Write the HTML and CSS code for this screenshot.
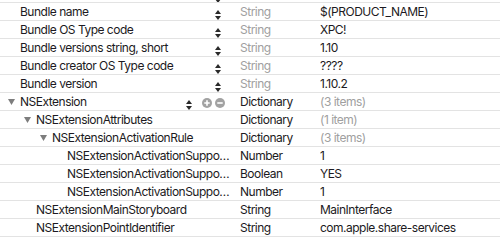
FILE: index.html
```html
<!DOCTYPE html>
<html lang="en">
<head>
  <meta charset="UTF-8">
  <title>Info.plist</title>
  <link rel="stylesheet" href="styles.css">
</head>
<body>
  <div class="plist">
    <!-- row above the visible area, only its bottom edge shows -->
    <div class="row cut">
      <div class="key">
        <span class="name"></span>
        <svg class="stepper" viewBox="0 0 6 10"><path d="M3 0L6 4H0z M0 6h6L3 10z"/></svg>
      </div>
    </div>

    <div class="row">
      <div class="key lvl0"><span class="slot"></span><span class="name">Bundle name</span>
        <svg class="stepper" viewBox="0 0 6 10"><path d="M3 0L6 4H0z M0 6h6L3 10z"/></svg></div>
      <div class="type dim">String</div>
      <div class="value">$(PRODUCT_NAME)</div>
    </div>
    <div class="row">
      <div class="key lvl0"><span class="slot"></span><span class="name">Bundle OS Type code</span>
        <svg class="stepper" viewBox="0 0 6 10"><path d="M3 0L6 4H0z M0 6h6L3 10z"/></svg></div>
      <div class="type dim">String</div>
      <div class="value">XPC!</div>
    </div>
    <div class="row">
      <div class="key lvl0"><span class="slot"></span><span class="name">Bundle versions string, short</span>
        <svg class="stepper" viewBox="0 0 6 10"><path d="M3 0L6 4H0z M0 6h6L3 10z"/></svg></div>
      <div class="type dim">String</div>
      <div class="value">1.10</div>
    </div>
    <div class="row">
      <div class="key lvl0"><span class="slot"></span><span class="name">Bundle creator OS Type code</span>
        <svg class="stepper" viewBox="0 0 6 10"><path d="M3 0L6 4H0z M0 6h6L3 10z"/></svg></div>
      <div class="type dim">String</div>
      <div class="value">????</div>
    </div>
    <div class="row">
      <div class="key lvl0"><span class="slot"></span><span class="name">Bundle version</span>
        <svg class="stepper" viewBox="0 0 6 10"><path d="M3 0L6 4H0z M0 6h6L3 10z"/></svg></div>
      <div class="type dim">String</div>
      <div class="value">1.10.2</div>
    </div>

    <div class="row hover">
      <div class="key lvl0">
        <span class="slot"><svg class="disclosure" viewBox="0 0 7 6"><path d="M0 0h7L3.5 6z"/></svg></span>
        <span class="name">NSExtension</span>
        <svg class="stepper" viewBox="0 0 6 10"><path d="M3 0L6 4H0z M0 6h6L3 10z"/></svg>
        <svg class="circle-btn" viewBox="0 0 10 10"><circle cx="5" cy="5" r="5"/><path d="M2.3 5h5.4M5 2.3v5.4"/></svg>
        <svg class="circle-btn" viewBox="0 0 10 10"><circle cx="5" cy="5" r="5"/><path d="M2.3 5h5.4"/></svg>
      </div>
      <div class="type">Dictionary</div>
      <div class="value dim">(3 items)</div>
    </div>
    <div class="row">
      <div class="key lvl1">
        <span class="slot"><svg class="disclosure" viewBox="0 0 7 6"><path d="M0 0h7L3.5 6z"/></svg></span>
        <span class="name">NSExtensionAttributes</span>
      </div>
      <div class="type">Dictionary</div>
      <div class="value dim">(1 item)</div>
    </div>
    <div class="row">
      <div class="key lvl2">
        <span class="slot"><svg class="disclosure" viewBox="0 0 7 6"><path d="M0 0h7L3.5 6z"/></svg></span>
        <span class="name">NSExtensionActivationRule</span>
      </div>
      <div class="type">Dictionary</div>
      <div class="value dim">(3 items)</div>
    </div>
    <div class="row">
      <div class="key lvl3"><span class="slot"></span><span class="name">NSExtensionActivationSuppo…</span></div>
      <div class="type">Number</div>
      <div class="value">1</div>
    </div>
    <div class="row">
      <div class="key lvl3"><span class="slot"></span><span class="name">NSExtensionActivationSuppo…</span></div>
      <div class="type">Boolean</div>
      <div class="value">YES</div>
    </div>
    <div class="row">
      <div class="key lvl3"><span class="slot"></span><span class="name">NSExtensionActivationSuppo…</span></div>
      <div class="type">Number</div>
      <div class="value">1</div>
    </div>
    <div class="row">
      <div class="key lvl1"><span class="slot"></span><span class="name">NSExtensionMainStoryboard</span></div>
      <div class="type">String</div>
      <div class="value">MainInterface</div>
    </div>
    <div class="row">
      <div class="key lvl1"><span class="slot"></span><span class="name">NSExtensionPointIdentifier</span></div>
      <div class="type">String</div>
      <div class="value">com.apple.share-services</div>
    </div>
  </div>
</body>
</html>
```

FILE: styles.css
```css
* {
  box-sizing: border-box;
  margin: 0;
  padding: 0;
}

body {
  background: #fff;
  font-family: Inter, "Noto Sans", sans-serif;
  font-size: 12px;
  letter-spacing: -0.5px;
  color: #1c1a22;
  width: 500px;
  height: 248px;
  overflow: hidden;
}

.plist {
  width: 100%;
}

.row {
  display: grid;
  grid-template-columns: 240px 80px 1fr;
  height: 18px;
  border-bottom: 1px solid #e3e3e3;
  align-items: center;
  white-space: nowrap;
}

.row.cut {
  height: 3px;
  overflow: hidden;
  align-items: end;
}

.row.cut .key {
  height: 3px;
  align-items: flex-end;
}

.key {
  display: flex;
  align-items: center;
  height: 17px;
  min-width: 0;
}

.lvl0 { padding-left: 4px; }
.lvl1 { padding-left: 20px; }
.lvl2 { padding-left: 36px; }
.lvl3 { padding-left: 51px; }

.slot {
  flex: none;
  width: 16px;
  display: flex;
  align-items: center;
}

.disclosure {
  width: 7px;
  height: 6px;
  margin-left: 4px;
  fill: #7d7d7d;
}

.name {
  flex: 1;
  min-width: 0;
  overflow: hidden;
}

.stepper {
  flex: none;
  width: 6px;
  height: 10px;
  margin-top: 6px;
  margin-right: 19px;
  fill: #2a2a2a;
}

.row.cut .stepper {
  margin-top: 0;
}

.hover .key {
  padding-right: 15px;
}

.hover .stepper {
  margin-right: 7px;
}

.circle-btn {
  flex: none;
  width: 10px;
  height: 10px;
  margin-top: 3px;
  margin-left: 3px;
}

.circle-btn circle {
  fill: #a2a2a2;
}

.circle-btn path {
  stroke: #fff;
  stroke-width: 1.6;
  fill: none;
}

.type,
.value {
  overflow: hidden;
}

.dim {
  color: #a0a0a0;
}
```
